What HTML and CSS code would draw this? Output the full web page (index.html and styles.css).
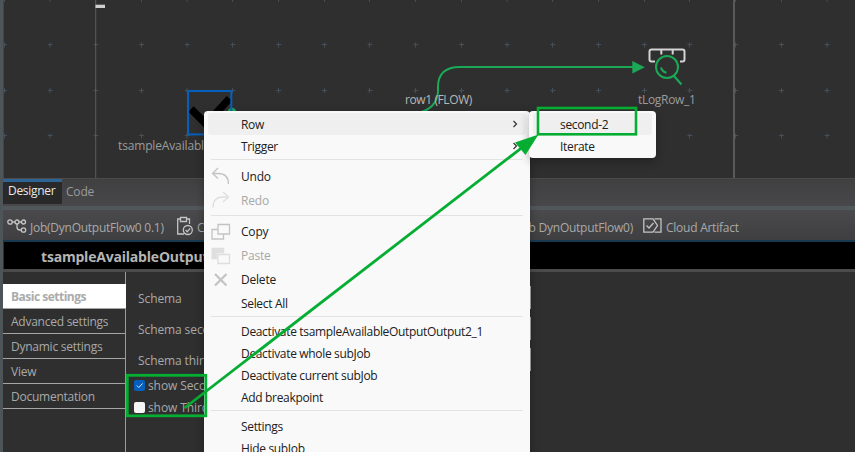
FILE: index.html
```html
<!DOCTYPE html>
<html lang="en">
<head>
<meta charset="utf-8">
<title>Job Designer</title>
<link rel="stylesheet" href="styles.css">
</head>
<body>
<div class="studio">
  <section class="canvas">
    <svg class="canvas-art" width="852" height="178" viewBox="3 0 852 178">
      <g fill="none" stroke="#43505c" stroke-width="1">
        <path d="M2 -.5H855M2 44.500H855M2 90.500H855M2 135.500H855" stroke-dasharray="5 40.700"  stroke-dashoffset="0"/>
        <path d="M4.500 -2V178M50 -2V178M95.500 -2V178M141.500 -2V178M187 -2V178M232.500 -2V178M278.500 -2V178M324.500 -2V178M369.500 -2V178M415.500 -2V178M461.500 -2V178M507 -2V178M552.500 -2V178M598.500 -2V178M644.500 -2V178M689.500 -2V178M735.500 -2V178M781.500 -2V178M827 -2V178" stroke-dasharray="5 40.500" stroke-dashoffset="1"/>
      </g>
      <path d="M95.700 0v178" stroke="#5c5c5c"/>
      <path d="M734 0v178" stroke="#6c6c6c" stroke-width="1.400"/>
      <rect x="95.500" y="4.700" width="9.500" height="3.300" fill="#d0d0d0"/>
      <path d="M191 109l15 15 23.500-25.500" fill="none" stroke="#000" stroke-width="7.500"/>
      <circle cx="232" cy="112" r="4.300" fill="#1ba957"/>
      <rect x="188" y="91" width="43.300" height="43.400" fill="none" stroke="#0560bd" stroke-width="2"/>
      <path d="M418 112.500C429 111 438 103 438 91V87Q438 67 460 67H634" fill="none" stroke="#1ba957" stroke-width="2"/>
      <path d="M632.300 61v12.600l12.500-6.300z" fill="#1ba957"/>
      <path d="M655 61.500h-3.500q-2 0-2-2v-8q0-2 2-2h31q2 0 2 2v8q0 2-2 2H680M661.300 50v4.500M672.700 50v4.500" fill="none" stroke="#d4d4d4" stroke-width="2"/>
      <circle cx="667" cy="67" r="11" fill="none" stroke="#1ba957" stroke-width="2"/>
      <path d="M661 67.500q1 4 5.500 5.300M674 76l7.500 8.500" fill="none" stroke="#1ba957" stroke-width="2.100"/>
    </svg>
    <span class="node-label source-label">tsampleAvailableOutput</span>
    <span class="node-label flow-label">row1 (FLOW)</span>
    <span class="node-label log-label">tLogRow_1</span>
  </section>
  <nav class="editor-tabs">
    <span class="editor-tab active">Designer</span>
    <span class="editor-tab">Code</span>
  </nav>
  <nav class="views">
    <div class="view-tab view-job">
      <svg width="20" height="16" viewBox="0 0 20 16"><g fill="none" stroke="#c4c4c4" stroke-width="1.300"><circle cx="3" cy="4" r="2.200"/><circle cx="10" cy="4" r="2"/><circle cx="16.500" cy="4" r="2"/><circle cx="16.500" cy="12" r="2.200"/><path d="M5.200 4H8M12 4h2.500M10 6v3q0 3 3 3h1.300"/></g></svg>
      <span>Job(DynOutputFlow0 0.1)</span>
    </div>
    <div class="view-tab view-component">
      <svg width="18" height="20" viewBox="0 0 18 20"><g fill="none" stroke="#c4c4c4" stroke-width="1.300"><path d="M4 3H1.700v15H8M11 3h2.500v5M4.500 1.500h6v4h-6z"/><circle cx="11.800" cy="14" r="4.500"/><path d="M9.600 14l1.600 1.700 3-3.300"/></g></svg>
      <span>Component</span>
    </div>
    <div class="view-tab view-run"><span>Run (Job DynOutputFlow0)</span></div>
    <div class="view-tab view-cloud">
      <svg width="19" height="15" viewBox="0 0 19 15"><g fill="none" stroke="#c4c4c4" stroke-width="1.300"><path d="M10 .8H.8v13.300H10l4.500-6.600zM11.500 .8h6.500v13.300h-6.500"/><path d="M3.500 7.500L6 10l4.500-5"/></g></svg>
      <span>Cloud Artifact</span>
    </div>
  </nav>
  <header class="component-title">tsampleAvailableOutputOutput2_1</header>
  <main class="settings">
    <nav class="side">
      <span class="side-item selected">Basic settings</span>
      <span class="side-item">Advanced settings</span>
      <span class="side-item">Dynamic settings</span>
      <span class="side-item">View</span>
      <span class="side-item">Documentation</span>
    </nav>
    <div class="form">
      <div class="field"><span>Schema</span><i class="field-end"></i></div>
      <div class="field"><span>Schema second</span><i class="field-end"></i></div>
      <div class="field"><span>Schema third</span><i class="field-end"></i></div>
      <div class="option"><i class="box checked"><svg width="11" height="11" viewBox="0 0 11 11"><path d="M2.800 5.500l2 2 3.700-4" fill="none" stroke="#d9eaff"/></svg></i><span>show Second</span></div>
      <div class="option"><i class="box"></i><span>show Third</span></div>
    </div>
  </main>
</div>

<div class="menu context-menu">
  <div class="item hover"><span>Row</span><svg class="chevron" width="6" height="8" viewBox="0 0 6 8"><path d="M1.500 1l3 3-3 3"/></svg></div>
  <div class="item"><span>Trigger</span><svg class="chevron" width="6" height="8" viewBox="0 0 6 8"><path d="M1.500 1l3 3-3 3"/></svg></div>
  <hr class="sep sep-commands">
  <div class="item tall"><svg class="icon" width="20" height="18" viewBox="0 0 20 18"><path d="M7 1L1.500 6.500 7 11.500M1.500 6.500H7Q17.500 6.500 17.500 17"/></svg><span>Undo</span></div>
  <div class="item tall disabled"><svg class="icon" width="20" height="18" viewBox="0 0 20 18"><path d="M12 1l5.500 5-5.500 5M17.500 6H12Q2 6 2 16.500"/></svg><span>Redo</span></div>
  <hr class="sep sep-edit">
  <div class="item tall"><svg class="icon" width="20" height="18" viewBox="0 0 20 18"><path d="M7 1.500h11.500v9.500H7zM7 6.500H1v9.500h11.500v-5"/></svg><span>Copy</span></div>
  <div class="item tall disabled"><svg class="icon" width="20" height="18" viewBox="0 0 20 18"><path class="solid" d="M.5 .8h12.800v5.500H6v6H.5z"/><path d="M7 7.500h11.500v9H7z"/></svg><span>Paste</span></div>
  <div class="item tall"><svg class="icon" width="20" height="18" viewBox="0 0 20 18"><path d="M4 3l11.500 11.500M15.500 3L4 14.500" stroke-width="2.200"/></svg><span>Delete</span></div>
  <div class="item"><span>Select All</span></div>
  <hr class="sep sep-state">
  <div class="item compact"><span>Deactivate tsampleAvailableOutputOutput2_1</span></div>
  <div class="item compact"><span>Deactivate whole subJob</span></div>
  <div class="item compact"><span>Deactivate current subJob</span></div>
  <div class="item compact"><span>Add breakpoint</span></div>
  <hr class="sep sep-last">
  <div class="item"><span>Settings</span></div>
  <div class="item"><span>Hide subJob</span></div>
</div>

<div class="menu submenu">
  <div class="item hover"><span>second-2</span></div>
  <div class="item"><span>Iterate</span></div>
</div>

<svg class="annotations" width="855" height="452" viewBox="0 0 855 452">
  <g fill="none" stroke="#05ad32">
    <rect x="538" y="108" width="98" height="26.300" stroke-width="2.600"/>
    <rect x="127.300" y="375.300" width="78.500" height="40.500" stroke-width="2.800"/>
    <path d="M184.500 408L526 144.500" stroke-width="2.800"/>
  </g>
  <path d="M538.500 134.500L515 142.500 525.500 155z" fill="#05ad32"/>
</svg>
</body>
</html>
```
FILE: styles.css
```css
* { box-sizing: border-box; }
body {
  margin: 0;
  width: 855px;
  height: 452px;
  overflow: hidden;
  background: #2f2f2f;
  color: #a9a9a9;
  font: 12px/16px "Open Sans", "Noto Sans", sans-serif;
  letter-spacing: -0.25px;
}
.studio {
  height: 452px;
  border-left: 3px solid #4d5559;
  display: flex;
  flex-direction: column;
  white-space: nowrap;
}
.canvas { position: relative; height: 178px; flex: none; border-left: 1px solid #454545; }
.canvas-art { display: block; margin-left: -1px; }
.node-label { position: absolute; color: #9b9b9b; }
.source-label { left: 114px; top: 138px; letter-spacing: -0.15px; }
.flow-label { left: 401px; top: 92px; color: #b8b8b8; letter-spacing: -0.4px; }
.log-label { left: 634px; top: 92px; letter-spacing: -0.3px; }

.editor-tabs {
  height: 28px;
  flex: none;
  display: flex;
  background: linear-gradient(#404041, #48484b);
  border-top: 1px solid #4b4b4b;
}
.editor-tab { padding: 5px 4px 0; height: 25px; color: #9a9a9a; letter-spacing: -0.2px; }
.editor-tab.active { width: 59px; background: #292929; color: #e8e8e8; border-top: 3px solid #2c6595; padding: 1px 0 0 5px; letter-spacing: -0.3px; }

.views {
  height: 36px;
  flex: none;
  display: flex;
  align-items: center;
  border-top: 4px solid #50585b;
  border-bottom: 2px solid #173a50;
  background: linear-gradient(#4a4a4d, #3f3f41);
  padding: 4px 0 0 4px;
}
.view-tab { display: flex; align-items: center; flex: none; }
.view-tab svg { flex: none; margin-top: -3px; }
.view-tab span { padding-top: 2px; }
.view-job { width: 169px; gap: 3px; }
.view-component { width: 265px; gap: 3px; }
.view-run { width: 192px; justify-content: flex-end; }
.view-cloud { margin-left: 10px; gap: 4px; }

.component-title {
  height: 27px;
  flex: none;
  margin-left: 1px;
  padding: 5px 0 0 37px;
  background: #000;
  color: #b5b5b5;
  font-size: 14px;
  font-weight: 700;
  letter-spacing: -0.2px;
  line-height: 20px;
}
.settings { flex: 1; display: flex; border-top: 3px solid #4b4b4b; }
.side { width: 123px; border-right: 1px solid #9c9c9c; padding-top: 12px; display: flex; flex-direction: column; }
.side-item { height: 25.100px; padding: 5px 8px 3px; border-bottom: 1px solid #a5a5a5; letter-spacing: -0.25px; }
.side-item.selected { margin-right: -1px; background: #fff; font-weight: 700; color: #ababab; letter-spacing: -0.5px; }
.form { flex: 1; padding: 10px 0 0 8px; }
.field { height: 31px; padding: 9px 0 0 4px; display: flex; letter-spacing: -0.1px; }
.field span { width: 392px; }
.field-end { width: 1px; height: 23px; margin-top: -5px; background: #aaa; }
.option { height: 21.500px; display: flex; align-items: center; gap: 3px; letter-spacing: -0.1px; }
.option span { padding-top: 1px; }
.box { width: 11px; height: 11px; border-radius: 2px; background: #f5f5f5; }
.box.checked { background: #0560bd; }
.box svg { display: block; }

.menu { position: absolute; background: #f9f9f9; color: #202020; white-space: nowrap; box-shadow: 0 3px 10px rgba(0, 0, 0, .3); }
.context-menu { left: 204px; top: 111px; width: 326px; height: 350px; padding: 2px 4px; border-radius: 4px 4px 0 0; }
.submenu { left: 529px; top: 111px; width: 127px; height: 47px; padding: 2px 4px; border-radius: 4px; }
.item { position: relative; height: 22px; padding-left: 33px; display: flex; align-items: center; border-radius: 3px; letter-spacing: -0.33px; }
.item span { padding-top: 2px; }
.item.tall span { padding-top: 1px; letter-spacing: -0.2px; }
.submenu .item { padding-left: 27px; }
.item.tall { height: 24px; }
.item.compact { height: 21.750px; }
.item.hover { background: #efefef; }
.item.disabled { color: #a8a8a8; }
.chevron { position: absolute; right: 8px; top: 7px; fill: none; stroke: #333; stroke-width: 1.200; }
.icon { position: absolute; left: 3px; top: 3px; fill: none; stroke: #c3c3c3; stroke-width: 1.300; }
.disabled .icon { stroke: #dedede; }
.solid { fill: #dfdfdf; stroke: none; }
.sep { height: 1px; border: 0; background: #e3e3e3; margin: 0 3px; }
.sep-commands { margin-top: 2px; margin-bottom: 4px; }
.sep-edit { margin-top: 3px; margin-bottom: 3.500px; }
.sep-state { margin-top: 2.500px; margin-bottom: 3.500px; }
.sep-last { margin-top: 2.500px; margin-bottom: 4px; }
.annotations { position: absolute; left: 0; top: 0; }
```
